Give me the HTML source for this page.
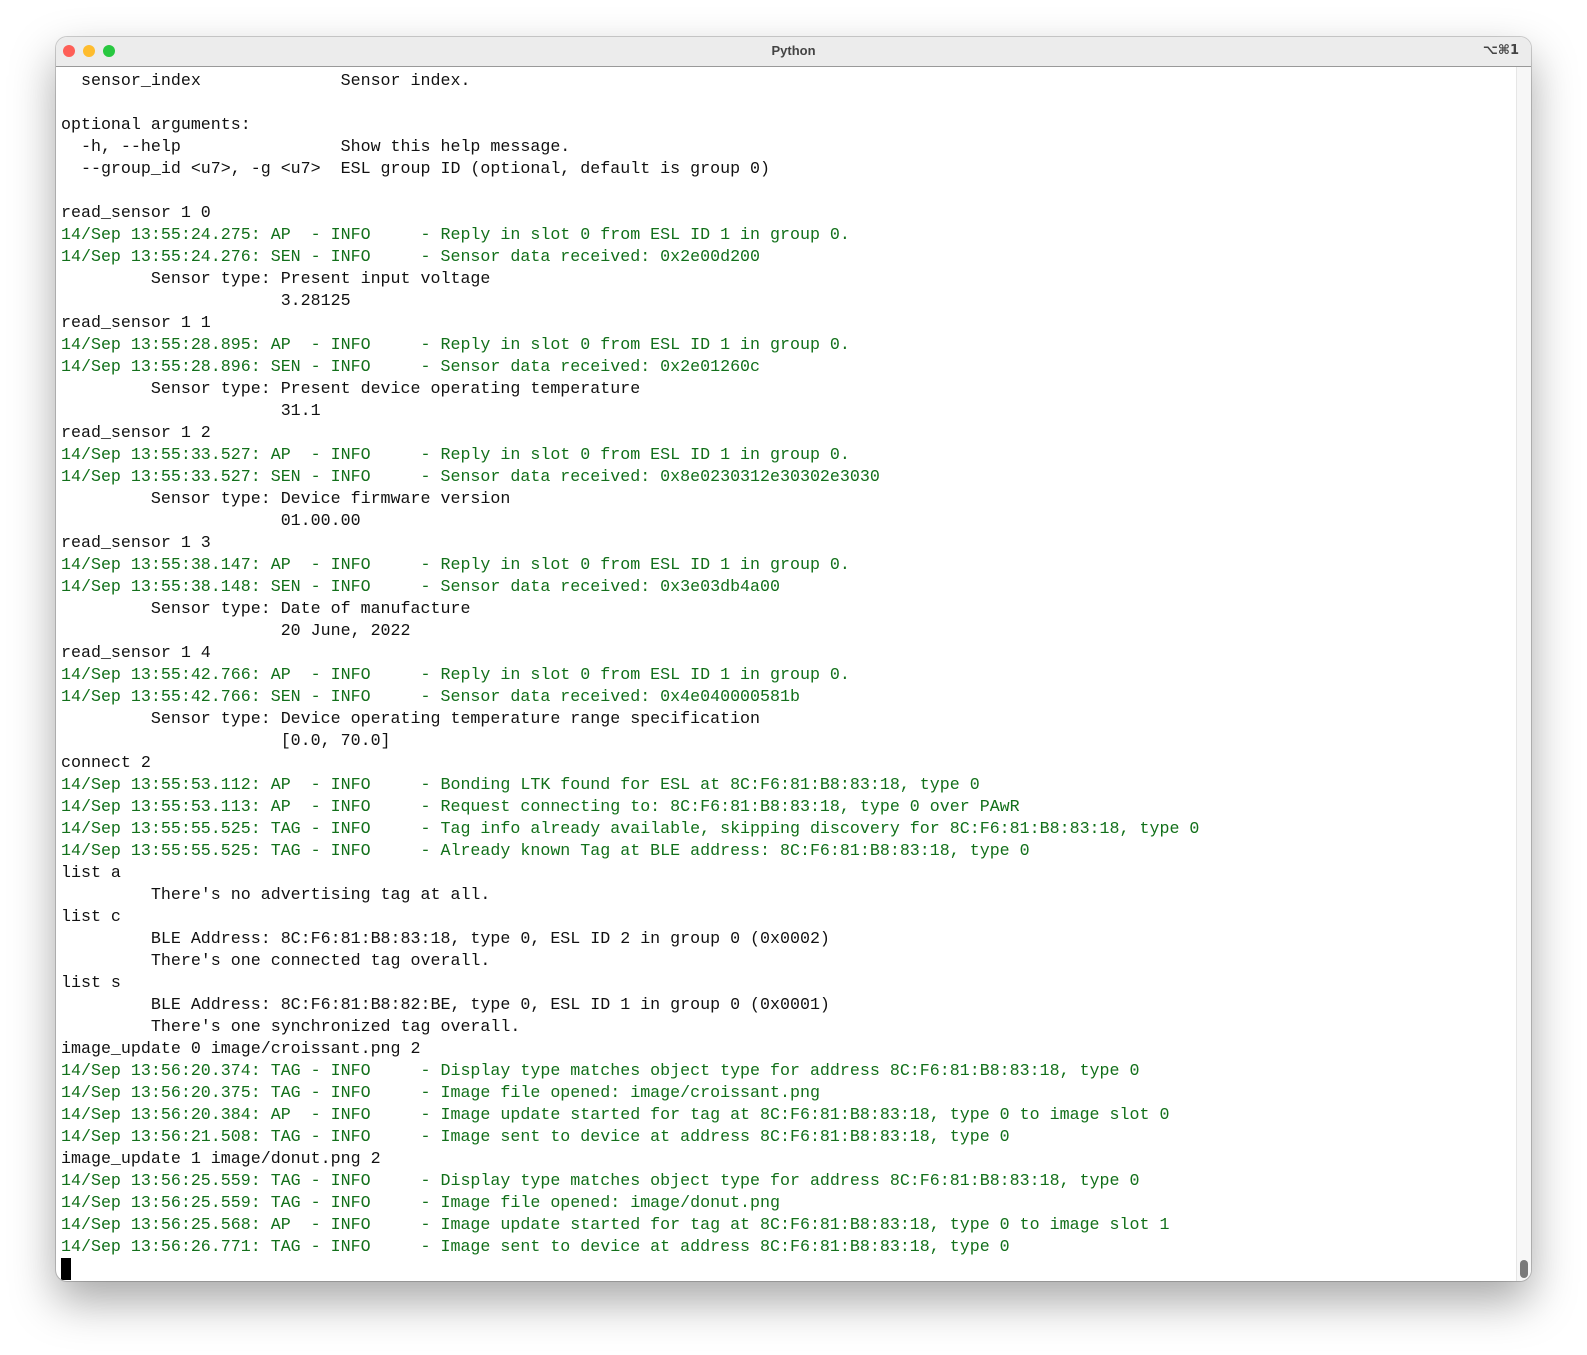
<!DOCTYPE html>
<html><head><meta charset="utf-8"><style>
html,body{margin:0;padding:0;width:1587px;height:1355px;background:#fff;overflow:hidden;position:relative}
.win{position:absolute;left:56px;top:37px;width:1475px;height:1244px;border-radius:11px;background:#fff;box-shadow:0 20px 45px rgba(0,0,0,.35),0 0 0 1px rgba(0,0,0,.18);overflow:hidden}
.tb{position:absolute;left:0;top:0;right:0;height:29px;background:#ececec;border-bottom:1px solid #999}
.dot{position:absolute;top:8px;width:12px;height:12px;border-radius:50%}
.title{position:absolute;left:0;right:0;top:6px;text-align:center;font:bold 13px "Liberation Sans",sans-serif;color:#444}
.kb{position:absolute;right:12px;top:6px;font:bold 13px "DejaVu Sans",sans-serif;color:#444}
.sb{position:absolute;right:0;top:30px;width:14px;bottom:0;background:#f7f7f7;border-left:1px solid #e6e6e6}
.thumb{position:absolute;right:3px;bottom:3px;width:8px;height:18px;border-radius:4px;background:#7a7a7a}
pre{position:absolute;left:5px;top:33px;margin:0;font:16.65px/22px "Liberation Mono",monospace;color:#111;white-space:pre}
.g{color:#12701a}
.cur{display:inline-block;width:10px;height:22px;background:#000;vertical-align:top}
</style></head><body>
<div class="win">
<div class="tb">
<div class="dot" style="left:7px;background:#fe5f57;border:0"></div>
<div class="dot" style="left:27px;background:#febc2e"></div>
<div class="dot" style="left:47px;background:#28c840"></div>
<div class="title">Python</div>
<div class="kb">⌥⌘1</div>
</div>
<div class="sb"><div class="thumb"></div></div>
<pre>  sensor_index              Sensor index.

optional arguments:
  -h, --help                Show this help message.
  --group_id &lt;u7&gt;, -g &lt;u7&gt;  ESL group ID (optional, default is group 0)

read_sensor 1 0
<span class="g">14/Sep 13:55:24.275: AP  - INFO     - Reply in slot 0 from ESL ID 1 in group 0.
14/Sep 13:55:24.276: SEN - INFO     - Sensor data received: 0x2e00d200</span>
         Sensor type: Present input voltage
                      3.28125
read_sensor 1 1
<span class="g">14/Sep 13:55:28.895: AP  - INFO     - Reply in slot 0 from ESL ID 1 in group 0.
14/Sep 13:55:28.896: SEN - INFO     - Sensor data received: 0x2e01260c</span>
         Sensor type: Present device operating temperature
                      31.1
read_sensor 1 2
<span class="g">14/Sep 13:55:33.527: AP  - INFO     - Reply in slot 0 from ESL ID 1 in group 0.
14/Sep 13:55:33.527: SEN - INFO     - Sensor data received: 0x8e0230312e30302e3030</span>
         Sensor type: Device firmware version
                      01.00.00
read_sensor 1 3
<span class="g">14/Sep 13:55:38.147: AP  - INFO     - Reply in slot 0 from ESL ID 1 in group 0.
14/Sep 13:55:38.148: SEN - INFO     - Sensor data received: 0x3e03db4a00</span>
         Sensor type: Date of manufacture
                      20 June, 2022
read_sensor 1 4
<span class="g">14/Sep 13:55:42.766: AP  - INFO     - Reply in slot 0 from ESL ID 1 in group 0.
14/Sep 13:55:42.766: SEN - INFO     - Sensor data received: 0x4e040000581b</span>
         Sensor type: Device operating temperature range specification
                      [0.0, 70.0]
connect 2
<span class="g">14/Sep 13:55:53.112: AP  - INFO     - Bonding LTK found for ESL at 8C:F6:81:B8:83:18, type 0
14/Sep 13:55:53.113: AP  - INFO     - Request connecting to: 8C:F6:81:B8:83:18, type 0 over PAwR
14/Sep 13:55:55.525: TAG - INFO     - Tag info already available, skipping discovery for 8C:F6:81:B8:83:18, type 0
14/Sep 13:55:55.525: TAG - INFO     - Already known Tag at BLE address: 8C:F6:81:B8:83:18, type 0</span>
list a
         There's no advertising tag at all.
list c
         BLE Address: 8C:F6:81:B8:83:18, type 0, ESL ID 2 in group 0 (0x0002)
         There's one connected tag overall.
list s
         BLE Address: 8C:F6:81:B8:82:BE, type 0, ESL ID 1 in group 0 (0x0001)
         There's one synchronized tag overall.
image_update 0 image/croissant.png 2
<span class="g">14/Sep 13:56:20.374: TAG - INFO     - Display type matches object type for address 8C:F6:81:B8:83:18, type 0
14/Sep 13:56:20.375: TAG - INFO     - Image file opened: image/croissant.png
14/Sep 13:56:20.384: AP  - INFO     - Image update started for tag at 8C:F6:81:B8:83:18, type 0 to image slot 0
14/Sep 13:56:21.508: TAG - INFO     - Image sent to device at address 8C:F6:81:B8:83:18, type 0</span>
image_update 1 image/donut.png 2
<span class="g">14/Sep 13:56:25.559: TAG - INFO     - Display type matches object type for address 8C:F6:81:B8:83:18, type 0
14/Sep 13:56:25.559: TAG - INFO     - Image file opened: image/donut.png
14/Sep 13:56:25.568: AP  - INFO     - Image update started for tag at 8C:F6:81:B8:83:18, type 0 to image slot 1
14/Sep 13:56:26.771: TAG - INFO     - Image sent to device at address 8C:F6:81:B8:83:18, type 0</span>
<span class="cur"></span></pre>
</div>
</body></html>
